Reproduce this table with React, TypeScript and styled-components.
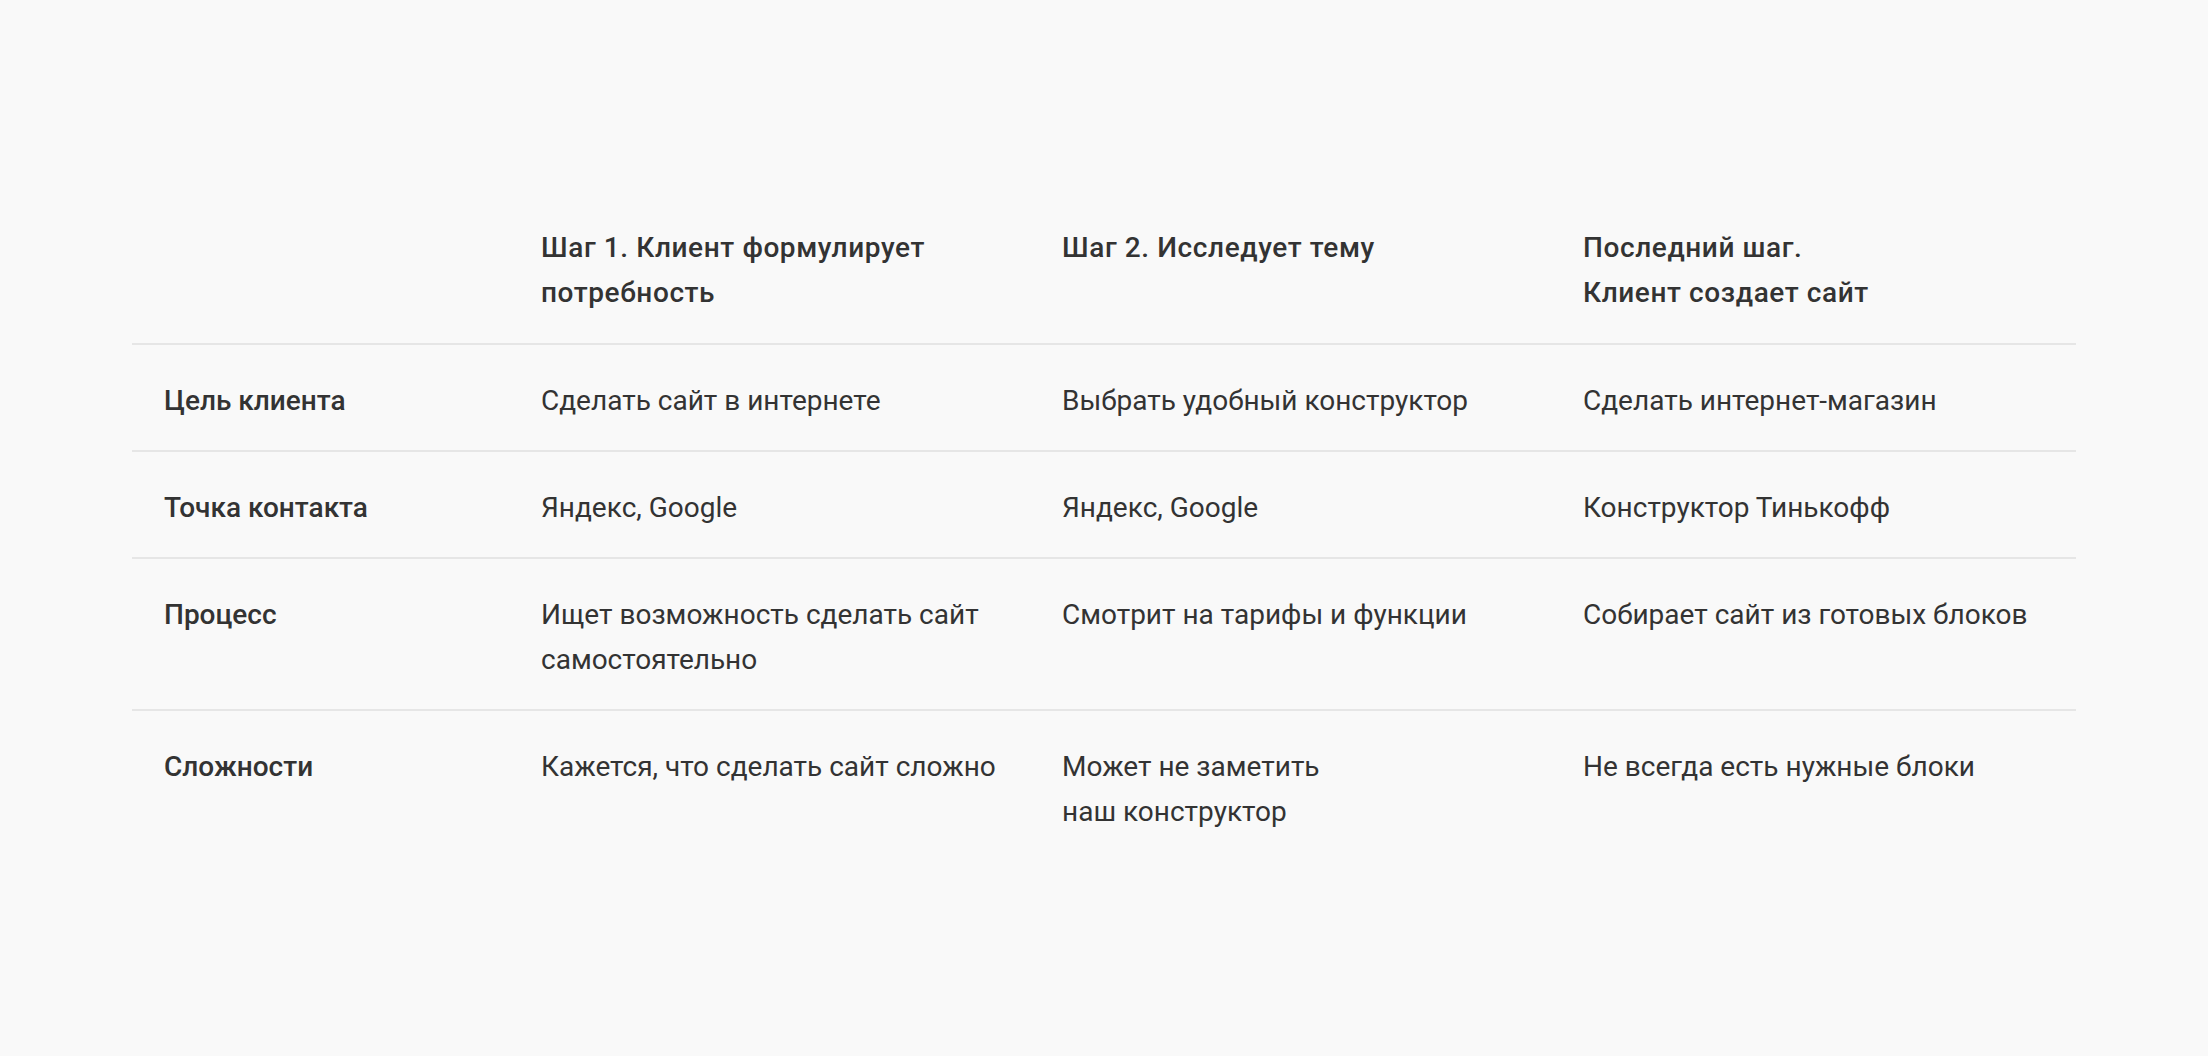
import React from 'react';
import styled, { createGlobalStyle } from 'styled-components';

const GlobalStyle = createGlobalStyle`
  html, body {
    margin: 0;
    padding: 0;
    background: #f9f9f9;
  }
  body {
    font-family: Roboto, "Liberation Sans", Arial, sans-serif;
    color: #333333;
  }
`

const Page = styled.main`
  min-height: 1056px;
  padding-top: 225px;
  box-sizing: border-box;
  display: flex;
  justify-content: center;
`

const Table = styled.div`
  width: 1944px;
  display: flex;
  flex-direction: column;
`

const Row = styled.div<{ $head?: boolean; $last?: boolean }>`
  display: grid;
  grid-template-columns: 409px 521px 521px 1fr;
  padding: ${p => (p.$head ? '0 0 28px' : '33px 0 27px')};
  border-bottom: ${p => (p.$last ? 'none' : '2px solid #e6e6e6')};
`

const Cell = styled.div<{ $bold?: boolean }>`
  font-size: 28px;
  line-height: 45px;
  font-weight: ${p => (p.$bold ? 500 : 400)};
  white-space: nowrap;
`

const HeadCell = styled(Cell)`
  letter-spacing: 0.6px;
`

const Label = styled(Cell)`
  padding-left: 32px;
`

type Line = string[]

const head: Line[] = [
  ['Шаг 1. Клиент формулирует', 'потребность'],
  ['Шаг 2. Исследует тему'],
  ['Последний шаг.', 'Клиент создает сайт'],
]

const rows: { label: string; cells: Line[] }[] = [
  {
    label: 'Цель клиента',
    cells: [['Сделать сайт в интернете'], ['Выбрать удобный конструктор'], ['Сделать интернет-магазин']],
  },
  {
    label: 'Точка контакта',
    cells: [['Яндекс, Google'], ['Яндекс, Google'], ['Конструктор Тинькофф']],
  },
  {
    label: 'Процесс',
    cells: [
      ['Ищет возможность сделать сайт', 'самостоятельно'],
      ['Смотрит на тарифы и функции'],
      ['Собирает сайт из готовых блоков'],
    ],
  },
  {
    label: 'Сложности',
    cells: [
      ['Кажется, что сделать сайт сложно'],
      ['Может не заметить', 'наш конструктор'],
      ['Не всегда есть нужные блоки'],
    ],
  },
]

const renderLines = (lines: Line) =>
  lines.map((l, i) => (
    <React.Fragment key={i}>
      {i > 0 && <br />}
      {l}
    </React.Fragment>
  ))

const App = () => {
  return (
    <>
      <GlobalStyle />
      <Page>
        <Table>
          <Row $head>
            <Label />
            {head.map((h, i) => (
              <HeadCell key={i} $bold>
                {renderLines(h)}
              </HeadCell>
            ))}
          </Row>
          {rows.map((r, idx) => (
            <Row key={r.label} $last={idx === rows.length - 1}>
              <Label $bold>{r.label}</Label>
              {r.cells.map((c, i) => (
                <Cell key={i}>{renderLines(c)}</Cell>
              ))}
            </Row>
          ))}
        </Table>
      </Page>
    </>
  );
};

export default App;
